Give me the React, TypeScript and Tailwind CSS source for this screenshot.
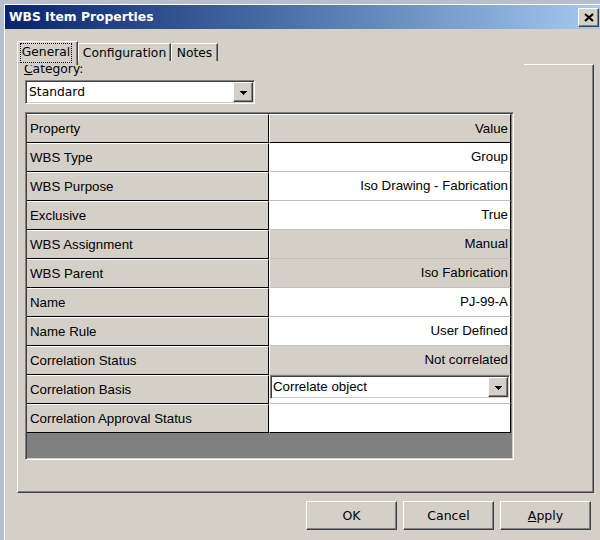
import React from 'react';

type Row = {
  name: string;
  value: string;
  kind: 'edit' | 'readonly' | 'combo';
};

const rows: Row[] = [
  { name: 'WBS Type', value: 'Group', kind: 'edit' },
  { name: 'WBS Purpose', value: 'Iso Drawing - Fabrication', kind: 'edit' },
  { name: 'Exclusive', value: 'True', kind: 'edit' },
  { name: 'WBS Assignment', value: 'Manual', kind: 'readonly' },
  { name: 'WBS Parent', value: 'Iso Fabrication', kind: 'readonly' },
  { name: 'Name', value: 'PJ-99-A', kind: 'edit' },
  { name: 'Name Rule', value: 'User Defined', kind: 'edit' },
  { name: 'Correlation Status', value: 'Not correlated', kind: 'readonly' },
  { name: 'Correlation Basis', value: 'Correlate object', kind: 'combo' },
  { name: 'Correlation Approval Status', value: '', kind: 'edit' },
];

const raised =
  'border border-t-white border-l-white border-r-[#404040] border-b-[#404040] shadow-[inset_-1px_-1px_0_#808080]';
const sunken =
  'border border-t-[#808080] border-l-[#808080] border-r-white border-b-white p-px shadow-[inset_1px_1px_0_#404040,inset_-1px_-1px_0_#d4d0c8]';

function Arrow() {
  return (
    <svg width="7" height="4" viewBox="0 0 7 4" shapeRendering="crispEdges">
      <path d="M0 0h7v1H0zM1 1h5v1H1zM2 2h3v1H2zM3 3h1v1H3z" fill="#000" />
    </svg>
  );
}

function DropButton() {
  return (
    <div className={`flex h-full w-[20px] items-center justify-center bg-[#d4d0c8] pt-px ${raised}`}>
      <Arrow />
    </div>
  );
}

function Combo({ text, width, textPad }: { text: string; width: string; textPad: string }) {
  return (
    <div className={`flex h-[24px] ${width} bg-white ${sunken}`}>
      <div className={`flex flex-1 items-center ${textPad}`}>{text}</div>
      <DropButton />
    </div>
  );
}

function GridRow({ row, last }: { row: Row; last: boolean }) {
  let valueCls =
    'flex w-[242px] items-center justify-end border-b border-l border-r border-l-white border-r-black bg-white pr-[2px]';
  if (row.kind === 'readonly') {
    valueCls =
      'flex w-[242px] items-center justify-end border-b border-l border-r border-l-white border-r-black bg-[#d4d0c8] pr-[2px]';
  }
  if (row.kind === 'combo') {
    valueCls = 'flex w-[242px] flex-col border-b border-l border-r border-l-white border-r-black bg-white';
  }
  const bottom = last ? 'border-b-black' : 'border-b-[#c0c0c0]';

  return (
    <div className="flex h-[29px]">
      <div className="flex w-[242px] items-center border-b border-r border-t border-t-white border-r-black border-b-black bg-[#d4d0c8] pl-[3px]">
        {row.name}
      </div>
      <div className={`${valueCls} ${bottom}`}>
        {row.kind === 'combo' ? (
          <Combo text={row.value} width="w-full" textPad="pl-px" />
        ) : (
          row.value
        )}
      </div>
    </div>
  );
}

function PushButton({ children }: { children: React.ReactNode }) {
  return (
    <button
      type="button"
      className={`flex h-[29px] w-[91px] items-center justify-center bg-[#d4d0c8] text-[12.5px] leading-[16px] ${raised}`}
    >
      {children}
    </button>
  );
}

export default function App() {
  return (
    <div className="h-[540px] w-[600px] overflow-hidden bg-[#b7bece] pl-[4px] pt-[4px] font-['DejaVu_Sans',sans-serif] text-[12px] text-black">
      <div className="flex h-[600px] w-[598px] flex-col border-l border-t border-white bg-[#d4d0c8]">
        {/* title bar */}
        <div className="flex h-[24px] items-center justify-between bg-linear-to-r from-[#0a246a] to-[#a6caf0] pl-[4px] pr-[3px]">
          <span className="text-[12.3px] font-bold leading-[16px] text-white">WBS Item Properties</span>
          <button type="button" className={`flex h-[19px] w-[21px] items-center justify-center bg-[#d4d0c8] ${raised}`}>
            <svg width="10" height="9" viewBox="0 0 10 9">
              <path d="M1 1L9 8M9 1L1 8" stroke="#000" strokeWidth="2.2" />
            </svg>
          </button>
        </div>

        <div className="flex flex-col pl-[12px]">
          {/* tabs */}
          <div className="mt-[12px] flex h-[23px] items-start">
            <div className="relative z-20 h-[24px] w-[61px] rounded-tl-[2px] border-l border-r border-t border-l-white border-t-white border-r-[#404040] bg-[#d4d0c8] pl-[2px] pt-px shadow-[inset_-1px_0_0_#808080]">
              <div className="flex h-[20px] w-[52px] justify-center border border-dotted border-black pb-[2px] text-[12.3px] leading-[16px]">
                General
              </div>
            </div>
            <div className="mt-[2px] flex h-[21px] w-[93px] justify-center overflow-hidden rounded-tl-[2px] border-l border-r border-t border-l-white border-t-white border-r-[#404040] pt-px text-[12.3px] leading-[16px] shadow-[inset_-1px_0_0_#808080]">
              Configuration
            </div>
            <div className="mt-[2px] flex h-[21px] w-[47px] justify-center overflow-hidden rounded-tl-[2px] border-l border-r border-t border-l-white border-t-white border-r-[#404040] pt-px text-[12.3px] leading-[16px] shadow-[inset_-1px_0_0_#808080]">
              Notes
            </div>
          </div>

          {/* tab panel */}
          <div className="flex h-[429px] w-[577px] flex-col border border-t-white border-l-white border-r-[#404040] border-b-[#404040] shadow-[inset_-1px_-1px_0_#808080]">
            <div className="relative z-10 -mt-[4px] h-[17px] w-[506px] bg-[#d4d0c8] pl-[6px] text-[12.3px] leading-[17px]">
              <span className="underline">C</span>ategory:
            </div>
            <div className="ml-[7px] mt-[2px] text-[12.3px]">
              <Combo text="Standard" width="w-[230px]" textPad="pl-[2px]" />
            </div>

            <div
              className={`ml-[7px] mt-[8px] flex h-[348px] w-[489px] flex-col bg-[#808080] font-['Liberation_Sans',Arial,sans-serif] text-[13.3px] text-black ${sunken}`}
            >
              <div className="flex h-[29px]">
                <div className="flex w-[242px] items-center border-b border-r border-t border-t-white border-r-black border-b-black bg-[#d4d0c8] pl-[3px]">
                  Property
                </div>
                <div className="flex w-[242px] items-center justify-end border-b border-l border-r border-t border-t-white border-l-white border-r-black border-b-black bg-[#d4d0c8] pr-[2px]">
                  Value
                </div>
              </div>
              {rows.map((row, i) => (
                <GridRow key={row.name} row={row} last={i === rows.length - 1} />
              ))}
            </div>
          </div>

          {/* dialog buttons */}
          <div className="mt-[8px] flex w-[577px] justify-end gap-[6px] pr-[3px]">
            <PushButton>OK</PushButton>
            <PushButton>Cancel</PushButton>
            <PushButton>
              <span>
                <span className="underline">A</span>pply
              </span>
            </PushButton>
          </div>
        </div>
      </div>
    </div>
  );
}
